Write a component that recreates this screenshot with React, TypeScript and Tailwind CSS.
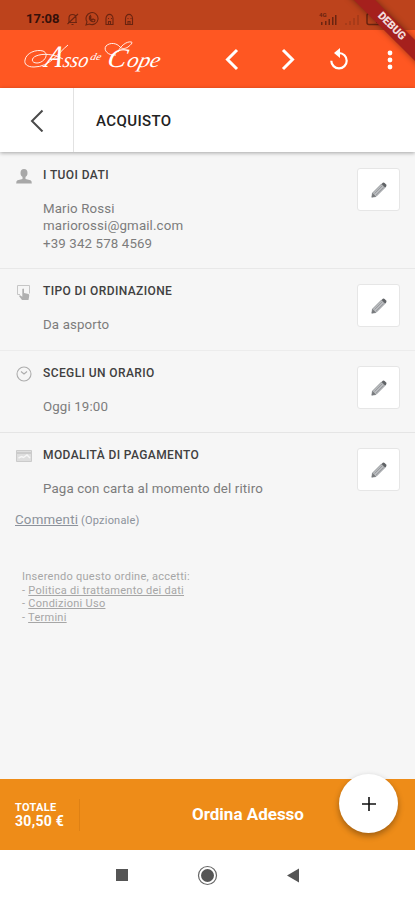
import type { ReactNode } from "react"

function StatusBar() {
    return (
        <div className="flex h-[30px] items-end bg-[#bd431c] pb-[4px] pl-[26px] text-[#6b2410]">
            <span className="w-[34px] text-[13px] leading-[14px] font-bold text-[#35100a]">17:08</span>
            <svg width="70" height="14" viewBox="0 0 70 14" className="ml-[6px]" fill="none" stroke="currentColor" strokeWidth="1.1">
                <path d="M2 10.500h9M3 10V6a3.500 3.500 0 0 1 7 0v4M5.500 12.500h2M1.500 12 12 2" />
                <path d="m20 13 1-3.200A6 6 0 1 1 23.500 12z" />
                <path d="M23.500 4.500c-1 3 2 6 5 5l.5-1.500-2-1-1 1-2-2 1-1-.5-1.500z" />
                <path d="M40 12.500V6.500a3 3.500 0 0 1 7 0v6zM42 6.500h1M45 6.500h1M42.500 12.500v-3h2v3" />
                <path d="M59.500 12.500V6.500a3 3.500 0 0 1 7 0v6zM61.500 6.500h1M64.500 6.500h1M62 12.500v-3h2v3" />
            </svg>
            <svg width="100" height="15" viewBox="0 0 100 15" className="ml-auto" fill="currentColor">
                <text x="4" y="6" fontSize="6" fontWeight="700">4G</text>
                <path d="M6 11h1.500v3H6zM10 10h1.500v4H10zM13.500 8H15v6h-1.500zM17 6h1.500v8H17zM20 4h1.500v10H20z" />
                <path d="M30 12h2v2h-2zM34 10h2v4h-2zM38 7h2v7h-2zM42 4h2v10h-2z" opacity=".25" />
                <rect x="52" y="2.500" width="18" height="11" rx="2" fill="none" stroke="currentColor" strokeWidth="1.5" />
                <path d="M61 4h8v8h-8z" />
            </svg>
        </div>
    )
}

function Logo() {
    return (
        <svg width="142" height="44" viewBox="0 0 142 44" className="ml-[22px]" fill="#fff" fontFamily="'Liberation Serif', serif" fontStyle="italic">
            {/* slant the lettering around its baseline */}
            <g transform="translate(0 30) skewX(-14)">
                <text x="22" y="0" fontSize="31" textLength="17" lengthAdjust="spacingAndGlyphs">A</text>
                <text x="40" y="0" fontSize="21" textLength="25" lengthAdjust="spacingAndGlyphs">sso</text>
                <text x="66" y="-7" fontSize="10" textLength="11" lengthAdjust="spacingAndGlyphs">de</text>
                <text x="84" y="0" fontSize="27" textLength="19" lengthAdjust="spacingAndGlyphs">C</text>
                <text x="104" y="0" fontSize="21" textLength="33" lengthAdjust="spacingAndGlyphs">ope</text>
            </g>
            <g fill="none" stroke="#fff" strokeWidth=".9">
                <path d="M46 8C36 16 28 30 12 30c-7 0-10-3-9-7 1-7 11-11 18-9 7 3 1 12-6 12-6 0-6-5-1-7 7-3 18-2 27 3" />
                <path d="M94 18c-8 1-13-5-10-9 4-4 11-3 14 1 2 2 5 2 8 0 4-3 5-5 3-5-4-1-11 4-13 10" />
            </g>
        </svg>
    )
}

function AppBar() {
    return (
        <div className="flex h-[58px] items-center bg-[#ff5722]">
            <Logo />
            <svg width="190" height="30" viewBox="0 0 190 30" className="ml-auto" fill="none" stroke="#fff" strokeWidth="3">
                <path d="m12 6-9.500 9.500L12 25" />
                <path d="m58 6 9.500 9.500L58 25" />
                <path d="M114 9a7.700 7.700 0 1 1-7.700 7.700" strokeWidth="2.2" />
                <path d="m109 9 6-5v10z" fill="#fff" stroke="none" />
                <g fill="#fff" stroke="none">
                    <circle cx="165" cy="9" r="2.4" />
                    <circle cx="165" cy="16" r="2.4" />
                    <circle cx="165" cy="23" r="2.4" />
                </g>
            </svg>
        </div>
    )
}

function DebugBanner() {
    return (
        <div className="absolute top-0 right-0 h-[72px] w-[78px] overflow-hidden">
            <div className="absolute top-[19px] -right-[31px] flex h-[15px] w-[110px] rotate-45 items-center justify-center bg-[#a5201d] text-[11px] font-black tracking-[-0.2px] text-[#f3dcdc] shadow-[0_0_6px_#0006]">
                DEBUG
            </div>
        </div>
    )
}

function PageHeader() {
    return (
        <div className="relative flex h-[64px] items-center bg-white shadow-[0_1px_4px_#0005]">
            <div className="flex h-full w-[74px] items-center justify-center border-r border-[#e2e2e2]">
                <svg width="14" height="24" viewBox="0 0 14 24" fill="none" stroke="#4a4a4a" strokeWidth="2">
                    <path d="M12.500 2.500 2 13l10.500 10.500" />
                </svg>
            </div>
            <h1 className="mt-[2px] ml-[22px] text-[15px] font-medium tracking-[0.4px] text-[#222]">ACQUISTO</h1>
        </div>
    )
}

function EditButton() {
    return (
        <button className="flex size-[43px] shrink-0 items-center justify-center rounded-[3px] border border-[#e6e6e6] bg-white">
            <svg width="18" height="18" viewBox="0 0 18 18">
                <path d="M1.800 16.200 2.500 12 11.500 3l3.500 3.500L6 15.500z" fill="#b9bbbe" stroke="#8d9094" strokeWidth=".8" />
                <path d="M2.500 12 6 15.500l-4.200.7z" fill="#77797c" />
                <path d="m11.500 3 1.300-1.300q1-.5 1.800.2l1.500 1.500q.7.900.1 1.800L15 6.500z" fill="#606366" />
                <path d="m4.500 12.500 7.500-7.500M6 14l7.500-7.500" stroke="#85888c" strokeWidth=".6" />
            </svg>
        </button>
    )
}

function UserIcon() {
    return (
        <svg width="16" height="17" viewBox="0 0 16 17" fill="#a8a8a8">
            <ellipse cx="8" cy="5" rx="3.5" ry="4" />
            <path d="M6.500 8h3v3l5 1.200q1.300.6 1.300 3.300H.2q0-2.700 1.300-3.300l5-1.200z" />
        </svg>
    )
}

function TouchIcon() {
    return (
        <svg width="16" height="17" viewBox="0 0 16 17">
            <path d="M4 10.500H1.500v-9h12v8" fill="none" stroke="#c6c6c6" />
            <path d="M6.300 5q1-1 1.700 0v4l4.500 1q1 .5.700 2l-.7 4H6l-3-4 1-.7 2.300 1.500z" fill="#b0b0b0" />
        </svg>
    )
}

function ClockIcon() {
    return (
        <svg width="16" height="16" viewBox="0 0 16 16" fill="none" stroke="#adadad" strokeWidth="1.1">
            <circle cx="8" cy="8" r="7" />
            <path d="m5 5.500 3 2.500 3-2.500" />
        </svg>
    )
}

function CardIcon() {
    return (
        <svg width="16" height="12" viewBox="0 0 16 12">
            <path d="M.5.5h15v11H.5z" fill="#dedede" stroke="#cbcbcb" />
            <path d="M1 2h14v2H1z" fill="#cbcbcb" />
            <path d="m2.500 8 3-1.500 2 1L11 5l3 3" fill="none" stroke="#f6f6f6" strokeWidth="1.5" />
        </svg>
    )
}

type SectionProps = {
    icon: ReactNode
    title: string
    lines: string[]
    className: string
}

function Section({ icon, title, lines, className }: SectionProps) {
    return (
        <section className={`flex items-start pr-[15px] pl-4 ${className}`}>
            <div className="mt-[14px] flex h-[18px] w-[27px] items-center">{icon}</div>
            <div className="flex-1">
                <h2 className="mt-[13px] text-[12px] leading-[18px] font-medium tracking-[0.4px] whitespace-nowrap text-[#404040]">{title}</h2>
                <div className="mt-4 text-[13.3px] leading-[17.3px] tracking-[0.13px] whitespace-nowrap text-[#7c7c7c]">
                    {lines.map((line) => (
                        <p key={line}>{line}</p>
                    ))}
                </div>
            </div>
            <div className="mt-[15px]">
                <EditButton />
            </div>
        </section>
    )
}

const terms = ["Politica di trattamento dei dati", "Condizioni Uso", "Termini"]

function Terms() {
    return (
        <div className="mt-[40px] ml-[22px] text-[11px] leading-[13.5px] tracking-[0.27px] text-[#a6a6a6]">
            <p>Inserendo questo ordine, accetti:</p>
            {terms.map((term) => (
                <p key={term}>
                    - <span className="underline">{term}</span>
                </p>
            ))}
        </div>
    )
}

function OrderBar() {
    return (
        <div className="relative flex h-[71px] items-center bg-[#ee8c18] text-white">
            <div className="ml-[15px] h-[32px] w-[65px] border-r border-[#df8114] font-bold">
                <p className="pt-[2px] text-[11px] leading-[13px] tracking-[0.3px]">TOTALE</p>
                <p className="text-[14px] leading-[15px] tracking-[0.3px]">30,50 €</p>
            </div>
            <p className="ml-[112px] text-[17px] font-bold whitespace-nowrap">Ordina Adesso</p>
            <button className="absolute -top-[5px] right-[17px] flex size-[59px] items-center justify-center rounded-full bg-white shadow-[0_3px_6px_#0005]">
                <svg width="16" height="16" viewBox="0 0 16 16" stroke="#111" strokeWidth="1.6">
                    <path d="M8 1v14M1 8h14" />
                </svg>
            </button>
        </div>
    )
}

function SystemNav() {
    return (
        <div className="h-[50px] bg-white">
            <svg width="415" height="50" viewBox="0 0 415 50" fill="#555">
                <path d="M116 19h12v12h-12z" />
                <circle cx="207.5" cy="25.5" r="6.5" />
                <circle cx="207.5" cy="25.5" r="9" fill="none" stroke="#666" strokeWidth="1.2" />
                <path d="m287 25.500 12-7v14z" />
            </svg>
        </div>
    )
}

export default function App() {
    return (
        <div className="relative flex h-[900px] w-[415px] flex-col overflow-hidden bg-[#f6f6f6] font-[Roboto,sans-serif]">
            <StatusBar />
            <AppBar />
            <DebugBanner />
            <PageHeader />
            <main className="flex-1">
                <Section
                    icon={<UserIcon />}
                    title="I TUOI DATI"
                    lines={["Mario Rossi", "mariorossi@gmail.com", "+39 342 578 4569"]}
                    className="h-[117px] border-b border-[#e8e8e8] pt-px"
                />
                <Section icon={<TouchIcon />} title="TIPO DI ORDINAZIONE" lines={["Da asporto"]} className="h-[82px] border-b border-[#ececec]" />
                <Section icon={<ClockIcon />} title="SCEGLI UN ORARIO" lines={["Oggi 19:00"]} className="h-[82px] border-b border-[#e5e5e5]" />
                <Section icon={<CardIcon />} title="MODALITÀ DI PAGAMENTO" lines={["Paga con carta al momento del ritiro"]} className="h-[78px]" />
                <p className="ml-[15px] text-[11px] leading-[18px] tracking-[0.2px] text-[#8c929b]">
                    <span className="text-[13.3px] underline">Commenti</span> (Opzionale)
                </p>
                <Terms />
            </main>
            <OrderBar />
            <SystemNav />
        </div>
    )
}
